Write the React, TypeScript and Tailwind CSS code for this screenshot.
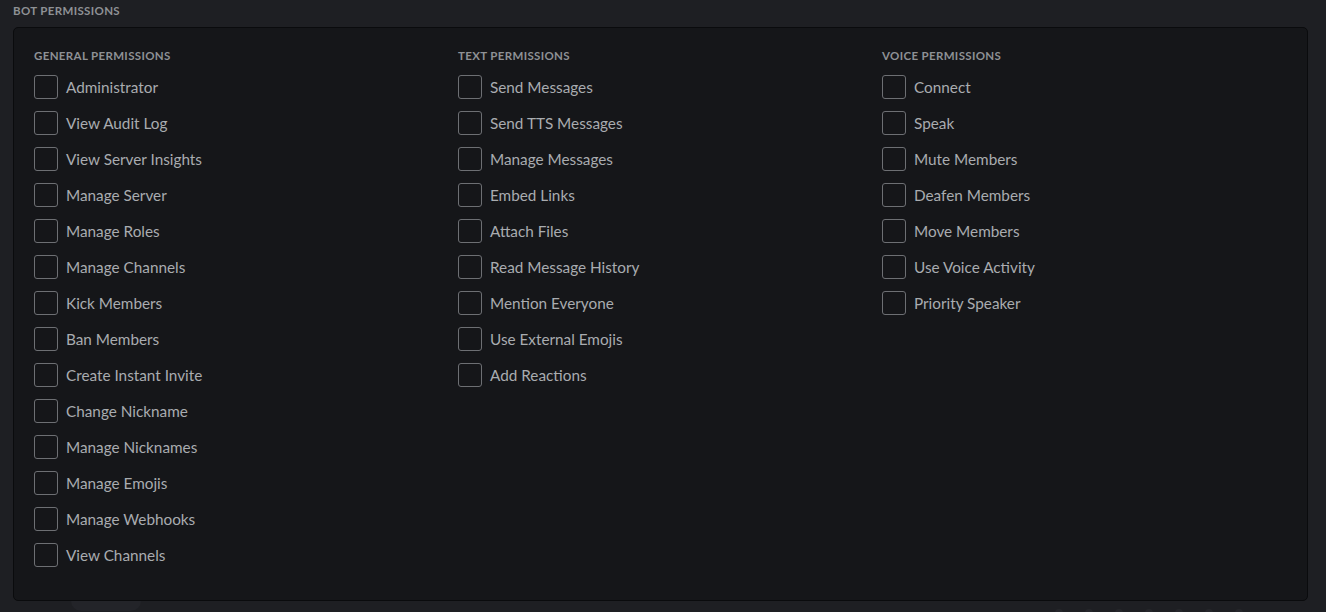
const general = [
  'Administrator',
  'View Audit Log',
  'View Server Insights',
  'Manage Server',
  'Manage Roles',
  'Manage Channels',
  'Kick Members',
  'Ban Members',
  'Create Instant Invite',
  'Change Nickname',
  'Manage Nicknames',
  'Manage Emojis',
  'Manage Webhooks',
  'View Channels',
];

const text = [
  'Send Messages',
  'Send TTS Messages',
  'Manage Messages',
  'Embed Links',
  'Attach Files',
  'Read Message History',
  'Mention Everyone',
  'Use External Emojis',
  'Add Reactions',
];

const voice = [
  'Connect',
  'Speak',
  'Mute Members',
  'Deafen Members',
  'Move Members',
  'Use Voice Activity',
  'Priority Speaker',
];

function Column({ title, items }: { title: string; items: string[] }) {
  return (
    <div className="w-[424px]">
      <h3 className="text-[11.5px] font-bold uppercase tracking-[0.03em] text-[#8e9195] leading-[14px] mb-[12px]">
        {title}
      </h3>
      <div className="flex flex-col gap-[12px]">
        {items.map((item) => (
          <label key={item} className="flex items-center gap-[8px] h-[24px] cursor-pointer">
            <span className="w-[24px] h-[24px] rounded-[3px] border border-[#6d6f73] shrink-0" />
            <span className="text-[15.3px] text-[#a9acb0] leading-[20px]">{item}</span>
          </label>
        ))}
      </div>
    </div>
  );
}

export default function App() {
  return (
    <div
      className="w-[1326px] h-[612px] bg-[#1e1f23] overflow-hidden px-[13px] pt-[4px]"
      style={{ fontFamily: 'Lato, "Noto Sans", sans-serif' }}
    >
      <h2 className="text-[11.5px] font-bold uppercase tracking-[0.03em] text-[#8e9195] leading-[14px] mb-[9px]">
        Bot Permissions
      </h2>
      <div className="w-[1295px] h-[574px] bg-[#151619] border border-[#0a0b0d] rounded-[5px] pl-[20px] pt-[21px] flex">
        <Column title="General Permissions" items={general} />
        <Column title="Text Permissions" items={text} />
        <Column title="Voice Permissions" items={voice} />
      </div>
      <div className="flex justify-between">
        <div className="ml-[58px] w-[70px] h-[10px] bg-[#232429] rounded-b-[20px]" />
        <div className="flex gap-[22px] mr-[70px] mt-[8px]">
          {[0, 1, 2, 3, 4, 5, 6].map((i) => (
            <span key={i} className="w-[8px] h-[8px] rounded-full bg-[#25262b]" />
          ))}
        </div>
      </div>
    </div>
  );
}
